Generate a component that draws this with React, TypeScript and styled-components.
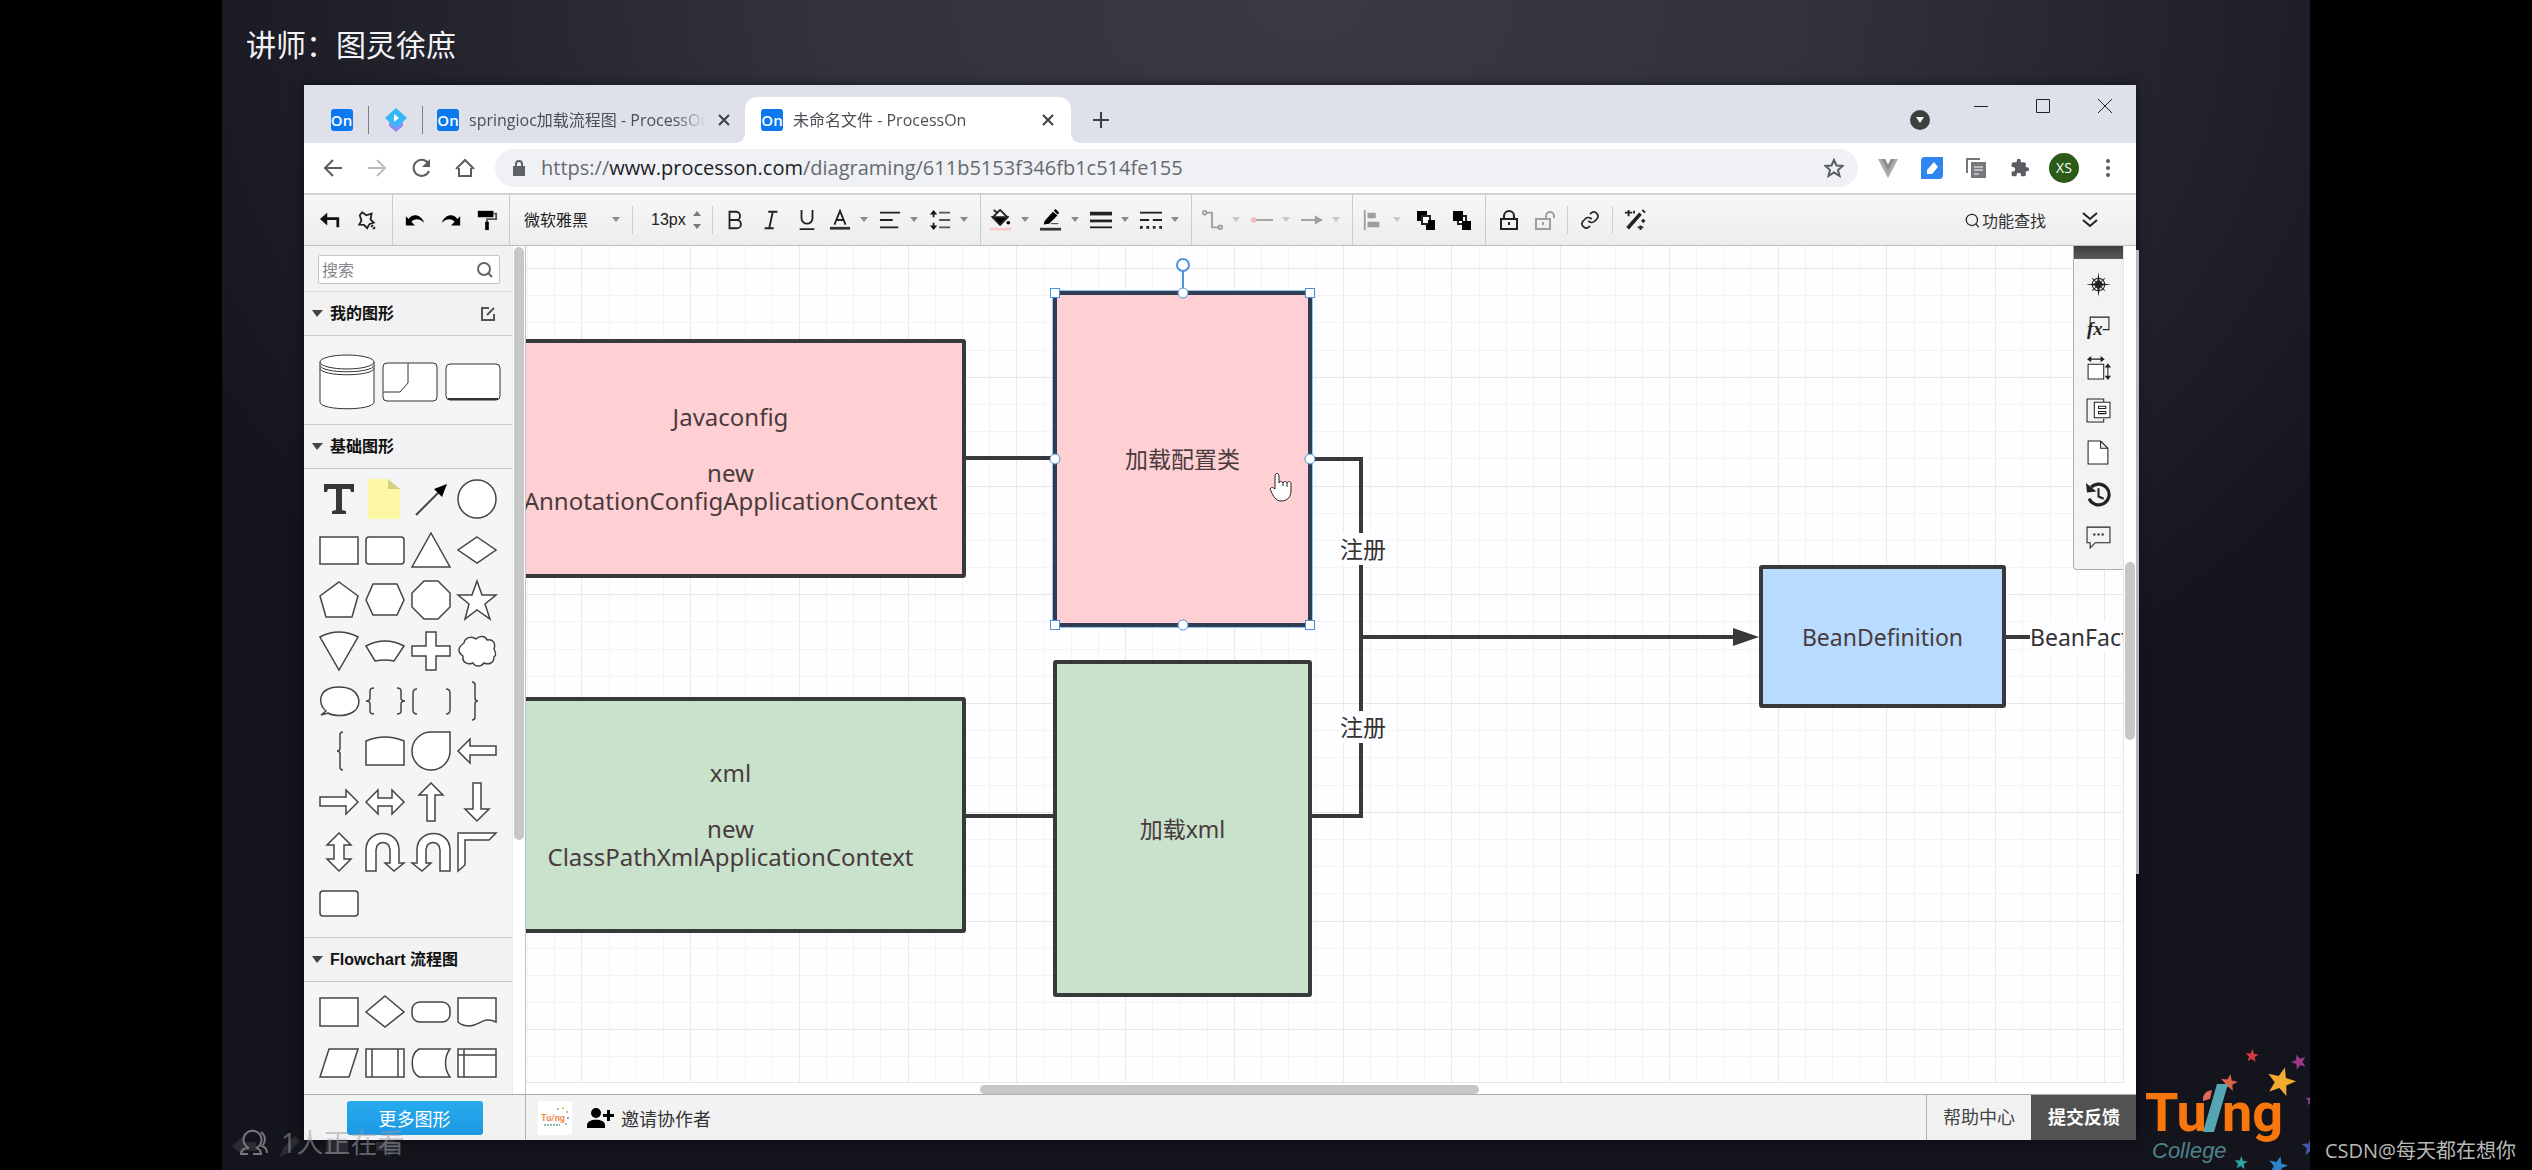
import React from "react";
import styled, { createGlobalStyle, css } from "styled-components";

const ui = `"Open Sans", "Noto Sans CJK SC", sans-serif`;
const diagramFont = `"Noto Sans", "Noto Sans CJK SC", sans-serif`;

const GlobalStyle = createGlobalStyle`
  * { box-sizing: border-box; }
  html, body { margin: 0; background: #000; }
  body { font-family: ${ui}; color: #333; overflow: hidden; }
  button, input, select { font: inherit; color: inherit; border: 0; background: none; padding: 0; margin: 0; outline: 0; }
  h1, h2, p { margin: 0; }
`;

const Page = styled.div`
  height: 100vh;
  padding: 0 222px;
  background: #000;
  position: relative;
`;
const Stage = styled.main`
  height: 100%;
  display: flex;
  flex-direction: column;
  padding: 0 174px 30px 82px;
  position: relative;
  overflow: hidden;
  background:
    radial-gradient(ellipse 60% 75% at 52% 0%, #3a3944 0%, #32323c 40%, rgba(20, 20, 30, 0) 100%),
    #14141d;
`;
const Lecturer = styled.h1`
  height: 85px;
  flex: none;
  margin-left: -58px;
  padding-top: 1px;
  font-size: 30px;
  line-height: 88px;
  font-weight: 400;
  color: #f4f4f6;
`;
const Browser = styled.section`
  flex: 1;
  min-height: 0;
  display: flex;
  flex-direction: column;
  background: #fff;
  position: relative;
  box-shadow: 0 0 10px rgba(0, 0, 0, 0.6);
`;
const EdgeLine = styled.div`
  position: absolute;
  left: 100%;
  top: 165px;
  width: 3px;
  height: 624px;
  background: #b4b8c1;
`;

/* ---- tab strip ---- */
const TabStrip = styled.div`
  height: 58px;
  flex: none;
  display: flex;
  align-items: flex-end;
  padding-left: 11px;
  background: #dee1e9;
`;
const Pinned = styled.button`
  width: 53px;
  height: 46px;
  display: flex;
  align-items: center;
  justify-content: center;
`;
const TabDivider = styled.span`
  width: 1px;
  height: 28px;
  margin-bottom: 9px;
  background: #7d8087;
`;
const Tab = styled.div<{ $active?: boolean }>`
  width: ${(p) => (p.$active ? 326 : 322)}px;
  height: 46px;
  padding: 0 ${(p) => (p.$active ? 16 : 14)}px;
  display: flex;
  align-items: center;
  gap: 10px;
  color: #4b4e55;
  position: relative;
  ${(p) =>
    p.$active &&
    css`
      background: #fff;
      border-radius: 12px 12px 0 0;
      &::before,
      &::after {
        content: "";
        position: absolute;
        bottom: 0;
        width: 10px;
        height: 10px;
      }
      &::before {
        right: 100%;
        background: radial-gradient(circle at 0 0, transparent 10px, #fff 10px);
      }
      &::after {
        left: 100%;
        background: radial-gradient(circle at 100% 0, transparent 10px, #fff 10px);
      }
    `}
`;
const TabTitle = styled.span`
  flex: 1;
  font-size: 16px;
  line-height: 24px;
  white-space: nowrap;
  overflow: hidden;
  mask-image: linear-gradient(90deg, #000 calc(100% - 32px), transparent);
`;
const Favicon = styled.span`
  width: 22px;
  height: 22px;
  flex: none;
  border-radius: 3px;
  background: #0a78ee;
  color: #fff;
  font: 600 15px/22px "Open Sans", sans-serif;
  text-align: center;
`;
const Bare = styled.button<{ $w: number; $h?: number; $muted?: boolean }>`
  width: ${(p) => p.$w}px;
  height: ${(p) => p.$h ?? 36}px;
  flex: none;
  display: flex;
  align-items: center;
  justify-content: center;
  opacity: ${(p) => (p.$muted ? 0.4 : 1)};
`;
const NewTab = styled(Bare)`
  margin-left: 18px;
`;
const WindowControls = styled.div`
  margin-left: auto;
  height: 100%;
  display: flex;
  align-items: flex-start;
`;
const TabSearch = styled(Bare)`
  margin: 12px 20px 0 0;
`;

/* ---- address bar ---- */
const AddressRow = styled.div`
  height: 50px;
  flex: none;
  display: flex;
  align-items: center;
  padding: 0 6px 0 7px;
`;
const Omnibox = styled.div`
  flex: 1;
  height: 38px;
  margin: 0 8px;
  padding: 0 12px 0 16px;
  display: flex;
  align-items: center;
  gap: 14px;
  border-radius: 19px;
  background: #f0f1f4;
`;
const Url = styled.div`
  flex: 1;
  font-size: 20px;
  line-height: 28px;
  color: #666a70;
  white-space: nowrap;
  outline: 0;
  b {
    font-weight: 400;
    color: #202124;
  }
`;
const Avatar = styled.span`
  width: 30px;
  height: 30px;
  border-radius: 50%;
  background: #2c5a17;
  color: #fff;
  font-size: 14px;
  line-height: 30px;
  text-align: center;
`;

/* ---- editor toolbar ---- */
const Toolbar = styled.div`
  height: 53px;
  flex: none;
  display: flex;
  border-top: 2px solid #d2d2d5;
  border-bottom: 1px solid #bdbdc0;
  background: linear-gradient(#f7f7f8, #ededef);
`;
const Group = styled.div<{ $pad?: number; $last?: boolean }>`
  display: flex;
  align-items: center;
  padding: 0 ${(p) => p.$pad ?? 5}px;
  border-right: ${(p) => (p.$last ? "0" : "1px solid #cbcbce")};
`;
const ShortRule = styled.span`
  width: 1px;
  height: 28px;
  margin: 0 4px;
  background: #cfcfd2;
`;
const FontPicker = styled.label`
  width: 113px;
  padding: 0 4px 0 9px;
  display: flex;
  align-items: center;
  font-size: 16px;
  select {
    flex: 1;
    min-width: 0;
    height: 30px;
    appearance: none;
    color: #222;
  }
`;
const SizePicker = styled.label`
  width: 71px;
  padding-left: 14px;
  display: flex;
  align-items: center;
  gap: 2px;
  input {
    width: 38px;
    height: 30px;
    font: 16px "Liberation Sans", sans-serif;
    color: #222;
  }
`;
const DropBtn = styled.button<{ $muted?: boolean }>`
  width: 50px;
  height: 36px;
  display: flex;
  align-items: center;
  gap: 5px;
  padding-left: 4px;
  opacity: ${(p) => (p.$muted ? 0.4 : 1)};
`;
const ToolbarEnd = styled.div`
  margin-left: auto;
  display: flex;
  align-items: center;
  gap: 22px;
  padding-right: 24px;
`;
const FindBtn = styled.button`
  display: flex;
  align-items: center;
  gap: 2px;
  height: 36px;
  font-size: 16px;
`;

/* ---- body ---- */
const Body = styled.div`
  flex: 1;
  min-height: 0;
  display: flex;
`;
const Sidebar = styled.aside`
  width: 222px;
  flex: none;
  display: flex;
  border-right: 1px solid #bfbfc2;
  background: #fff;
`;
const ShapeList = styled.div`
  flex: 1;
  overflow: hidden;
  background: #f5f5f7;
  border-right: 1px solid #ececee;
`;
const Track = styled.div<{ $across?: boolean }>`
  display: flex;
  ${(p) => (p.$across ? "height: 11px; padding: 2px 0 0 454px;" : "width: 12px; padding: 1px 1px 0;")}
`;
const Thumb = styled.span<{ $len: number; $across?: boolean }>`
  ${(p) => (p.$across ? `width: ${p.$len}px; height: 9px;` : `height: ${p.$len}px; width: 10px;`)}
  border-radius: 5px;
  background: #c7c7c8;
`;
const SearchRow = styled.div`
  height: 46px;
  padding: 9px 12px 0 14px;
  border-bottom: 1px solid #d9d9db;
  background: #f2f2f3;
`;
const SearchBox = styled.label`
  height: 29px;
  display: flex;
  align-items: center;
  padding: 0 6px 0 3px;
  border: 1px solid #c6c6c9;
  border-radius: 2px;
  background: #fff;
  font-size: 16px;
  input {
    flex: 1;
    min-width: 0;
  }
  input::placeholder {
    color: #85858a;
    opacity: 1;
  }
`;
const SectionHead = styled.button`
  width: 100%;
  height: 44px;
  display: flex;
  align-items: center;
  gap: 7px;
  padding: 0 16px 0 8px;
  border-bottom: 1px solid #c9c9cb;
  background: #f2f2f3;
  font: 700 16px/24px "Liberation Sans", "Noto Sans CJK SC", sans-serif;
  color: #111;
  span {
    flex: 1;
    text-align: left;
  }
`;
const MyShapes = styled.div`
  height: 89px;
  display: flex;
  align-items: center;
  gap: 9px;
  padding: 4px 16px 0;
  border-bottom: 1px solid #c9c9cb;
`;
const ShapeGrid = styled.div<{ $h: number }>`
  height: ${(p) => p.$h}px;
  padding: 5px 12px 9px;
  display: grid;
  grid-template-columns: repeat(4, 46px);
  grid-auto-rows: 1fr;
  border-bottom: 1px solid #c9c9cb;
`;
const ShapeBtn = styled.button`
  display: flex;
  align-items: center;
  justify-content: center;
  svg {
    overflow: visible;
  }
`;

const Workspace = styled.div`
  flex: 1;
  min-width: 0;
  display: grid;
  grid-template: 1fr 11px / 1fr 12px;
  background: #fff;
`;
const Board = styled.div`
  position: relative;
  overflow: hidden;
  background: #fefdff;
  border-right: 1px solid #e6e6ea;
  border-bottom: 1px solid #e6e6ea;
`;
const Layer = styled.svg`
  position: absolute;
  inset: 0;
  width: 100%;
  height: 100%;
`;
const Node = styled.div<{
  $x: number;
  $y: number;
  $w: number;
  $h: number;
  $fill: string;
  $selected?: boolean;
  $large?: boolean;
}>`
  position: absolute;
  left: ${(p) => p.$x}px;
  top: ${(p) => p.$y}px;
  width: ${(p) => p.$w}px;
  height: ${(p) => p.$h}px;
  display: flex;
  align-items: center;
  justify-content: center;
  border: 4px solid ${(p) => (p.$selected ? "#2f3d54" : "#38393b")};
  border-radius: 3px;
  background: ${(p) => p.$fill};
  font: ${(p) => (p.$large ? 24 : 23)}px/28px ${diagramFont};
  color: #4a3a3d;
  text-align: center;
  white-space: pre;
  box-shadow: ${(p) => (p.$selected ? "0 0 0 1px #9cc3ee" : "none")};
`;
const EdgeLabel = styled.span<{ $x: number; $y: number }>`
  position: absolute;
  left: ${(p) => p.$x}px;
  top: ${(p) => p.$y}px;
  padding: 1px 0;
  background: #fefdff;
  font: 23px/30px ${diagramFont};
  color: #333;
  white-space: nowrap;
`;
const Dock = styled.nav`
  position: absolute;
  top: 0;
  right: 0;
  width: 50px;
  height: 324px;
  border: 1px solid #b0b0b3;
  border-width: 0 0 1px 1px;
  border-bottom-left-radius: 4px;
  background: #f3f3f4;
  display: flex;
  flex-direction: column;
  align-items: center;
  &::before {
    content: "";
    align-self: stretch;
    height: 13px;
    margin-bottom: 4px;
    background: linear-gradient(#3c3c3e, #5a5a5c);
  }
`;

/* ---- footer ---- */
const Footer = styled.footer`
  height: 46px;
  flex: none;
  display: flex;
  border-top: 1px solid #adadb0;
  background: #f2f2f3;
  font-size: 18px;
`;
const FooterLeft = styled.div`
  width: 222px;
  padding-top: 6px;
  display: flex;
  justify-content: center;
  align-items: flex-start;
  border-right: 1px solid #b0b0b3;
`;
const MoreBtn = styled.button`
  width: 136px;
  height: 34px;
  border-radius: 3px;
  background: linear-gradient(#27abee, #1c98e2);
  color: #fff;
  font-size: 18px;
`;
const Team = styled.div`
  flex: 1;
  display: flex;
  align-items: center;
  gap: 15px;
  padding-left: 12px;
`;
const TeamLogo = styled.span`
  width: 34px;
  height: 34px;
  display: flex;
  background: #fff;
`;
const InviteBtn = styled.button`
  display: flex;
  align-items: center;
  gap: 7px;
`;
const FooterLink = styled.a<{ $dark?: boolean }>`
  padding: 0 16px;
  line-height: 45px;
  text-decoration: none;
  border-left: 1px solid ${(p) => (p.$dark ? "#4f4f50" : "#b0b0b3")};
  background: ${(p) => (p.$dark ? "#525253" : "transparent")};
  color: ${(p) => (p.$dark ? "#fff" : "#444")};
  font-weight: ${(p) => (p.$dark ? 700 : 400)};
`;

/* ---- overlays ---- */
const Viewers = styled.div`
  position: absolute;
  left: 14px;
  bottom: 8px;
  display: flex;
  align-items: center;
  gap: 13px;
  font-size: 27px;
  line-height: 38px;
  color: rgba(160, 160, 165, 0.55);
`;
const PenTools = styled.svg`
  position: absolute;
  left: 10px;
  bottom: 12px;
`;
const School = styled.svg`
  position: absolute;
  right: 0;
  bottom: 0;
`;
const Credit = styled.p`
  position: absolute;
  right: 16px;
  bottom: 4px;
  font-size: 20px;
  line-height: 30px;
  color: #b8b8b8;
`;

type IcoProps = { s?: number; w?: number; c?: string; f?: string; box?: number; children: React.ReactNode };
const Ico = ({ s = 24, w = 2, c = "#222", f = "none", box = 24, children }: IcoProps) => (
  <svg width={s} height={s} viewBox={`0 0 ${box} ${box}`} fill={f} stroke={c} strokeWidth={w} aria-hidden="true">
    {children}
  </svg>
);
const Caret = () => (
  <svg width="16" height="8" viewBox="0 0 16 8" aria-hidden="true">
    <path d="M4 1h8L8 6z" fill="#8a8a8c" />
  </svg>
);
const Close = ({ s = 14 }: { s?: number }) => (
  <Ico s={s} w={2} c="#3c4043" box={14}>
    <path d="M2 2l10 10M12 2L2 12" />
  </Ico>
);

const tool = {
  reply: <path d="M1 11l8-7v5h13v11h-3v-8H9v6z" fill="#111" stroke="none" />,
  beautify: (
    <>
      <path d="M9 3l4 4 6-1-2 6 3 4-5 1-3 4-3-4-5-1 3-4-1-6z" transform="rotate(-8 12 12)" />
      <path d="M18 18l4 4" strokeWidth="3" strokeDasharray="2 1" />
    </>
  ),
  undo: <path d="M2 8v10h10l-4-4c3-4 9-4 14 1-3-9-13-11-17-4z" fill="#000" stroke="none" />,
  redo: <path d="M22 8v10H12l4-4c-3-4-9-4-14 1C5 6 15 4 19 11z" fill="#000" stroke="none" />,
  brush: (
    <>
      <path d="M2 2h17v7H2z" fill="#000" stroke="none" />
      <path d="M19 5h3v6H12v4" stroke="#555" />
      <path d="M10 14h4v9h-4z" fill="#000" stroke="none" />
    </>
  ),
  bold: <path d="M6 3h7a4.5 4.5 0 010 9H6zM6 12h8a4.500 4.500 0 010 9H6z" />,
  italic: <path d="M9 3h10M5 21h10M14 3l-4 18" />,
  underline: <path d="M6 1v9a6 6 0 0012 0V1M4 22h16" />,
};
const dropTools: Record<string, React.ReactNode> = {
  color: (
    <>
      <path d="M6 17l6-15 6 15M8 12h8" />
      <path d="M1 21h22" strokeWidth="3" stroke="#333" />
    </>
  ),
  align: <path d="M1 4h22M1 12h14M1 20h20" />,
  spacing: (
    <>
      <path d="M11 4h12M11 12h12M11 20h12" stroke="#555" />
      <path d="M5 3v6M5 15v6" />
      <path d="M5 1l4 5H1zM5 23l4-5H1z" fill="#111" stroke="none" />
    </>
  ),
  fill: (
    <>
      <path d="M4 1l4 3" />
      <path d="M11 1l8 8-8 8-8-8z" />
      <path d="M3 9h16l-8 8z" fill="#000" />
      <circle cx="20" cy="15" r="2" fill="#000" stroke="none" />
      <path d="M0 22h23" stroke="#fbc8cc" strokeWidth="3" />
    </>
  ),
  pen: (
    <>
      <path d="M5 13L14 3l5 4-9 9-6 1z" fill="#000" stroke="none" />
      <path d="M15 2l2-2 4 4-2 2z" fill="#000" stroke="none" />
      <path d="M12 16h8" strokeWidth="1" />
      <path d="M0 22h23" stroke="#333" strokeWidth="3" />
    </>
  ),
  weight: (
    <>
      <path d="M0 5h24" strokeWidth="4" />
      <path d="M0 13h24" strokeWidth="3" />
      <path d="M0 20h24" strokeWidth="2" />
    </>
  ),
  dash: (
    <>
      <path d="M0 4h24" />
      <path d="M0 12h10M14 12h10" />
      <path d="M0 20h24" strokeDasharray="3 4" strokeWidth="3" />
    </>
  ),
  link: (
    <>
      <path d="M5 4h7v16h7" />
      <circle cx="4" cy="4" r="2" fill="#fff" />
      <circle cx="21" cy="20" r="2" fill="#fff" />
    </>
  ),
  start: (
    <>
      <path d="M2 12h22" />
      <circle cx="3" cy="12" r="2" stroke="#f66" fill="#f66" />
    </>
  ),
  end: (
    <>
      <path d="M0 12h18" />
      <path d="M15 7l9 5-9 5z" fill="#222" stroke="none" />
    </>
  ),
  arrange: (
    <>
      <path d="M3 1v22" />
      <path d="M6 4h9v6H6zM6 14h13v6H6z" fill="#222" stroke="none" />
    </>
  ),
};
const Drop = ({ name, label, muted }: { name: string; label: string; muted?: boolean }) => (
  <DropBtn aria-label={label} $muted={muted}>
    <Ico s={22}>{dropTools[name]}</Ico>
    <Caret />
  </DropBtn>
);

const basicShapes: React.ReactNode[] = [
  <path d="M4 4h30v8h-3l-1-3h-8v21l4 1v3H12v-3l4-1V9H8l-1 3H4z" fill="#38383a" stroke="none" />,
  <>
    <path d="M2-1h20l12 10v30H2z" fill="#fcf7a2" stroke="none" />
    <path d="M22-1v10h12z" fill="#d5cf86" stroke="none" />
  </>,
  <>
    <path d="M4 35L28 11" strokeWidth="2" />
    <path d="M35 4L30 17l-8-8z" fill="#000" stroke="none" />
  </>,
  <circle cx="19" cy="19" r="19" />,
  <rect x="0" y="6" width="38" height="27" />,
  <rect x="0" y="6" width="38" height="27" rx="3" />,
  <path d="M19 2l19 34H0z" />,
  <path d="M19 6l19 13-19 13L0 19z" />,
  <path d="M19 1l19 14-6 21H6L0 15z" />,
  <path d="M7 3h24l7 16-7 15H7L0 19z" />,
  <path d="M12 0h14l12 12v14L26 38H12L0 26V12z" />,
  <path d="M19 0l5 14h14L27 23l5 15-13-9-12 9 4-15L0 14h14z" />,
  <path d="M0 5Q19-5 38 5L19 38z" />,
  <path d="M0 14Q19 4 38 14L28 29Q19 27 9 29z" />,
  <path d="M14 0h10v14h14v10H24v14H14V24H0V14h14z" />,
  <path d="M6 11c1-6 8-7 12-4 4-4 10-3 11 1 6-1 9 3 7 9 2 4 2 7 0 8 0 6-5 8-10 6-3 4-9 4-11 0-5 2-11 0-10-7-6-4-5-9 1-13z" />,
  <path d="M6 29C-3 22-2 5 19 5s25 18 14 25c-8 5-20 4-25 1L1 33z" />,
  <path
    d="M8 6q-4 0-4 3v7q0 3-4 3 4 0 4 3v7q0 3 4 3M31 6q4 0 4 3v7q0 3 4 3-4 0-4 3v7q0 3-4 3"
    fill="none"
  />,
  <path d="M5 7q-4 0-4 4v17q0 4 4 4M34 7q4 0 4 4v17q0 4-4 4" fill="none" />,
  <path d="M14 0q3 0 3 3v13q0 3 3 3-3 0-3 3v13q0 3-3 3" fill="none" />,
  <path d="M23 0q-3 0-3 3v13q0 3-3 3 3 0 3 3v13q0 3 3 3" fill="none" />,
  <path d="M0 9Q19 1 38 9v24H0z" />,
  <path d="M19 0h19v19A19 19 0 1119 0z" />,
  <path d="M0 19L12 7v7h26v9H12v8z" />,
  <path d="M38 19L26 7v7H0v9h26v8z" />,
  <path d="M0 19L12 7v8h14V7l12 12-12 12v-8H12v8z" />,
  <path d="M19 0L7 12h8v26h8V12h8z" />,
  <path d="M19 38L7 26h8V0h8v26h8z" />,
  <path d="M19 0l12 12h-7v14h7L19 38 7 26h7V12H7z" />,
  <path d="M0 38V17C0-5 33-5 33 17v13h5l-10 8-9-8h5V17c0-10-14-10-14 0v21z" />,
  <path d="M38 38V17C38-5 5-5 5 17v13H0l10 8 9-8h-5V17c0-10 14-10 14 0v21z" />,
  <path d="M0 0h38l-7 7H7v25l-7 6z" />,
  <rect x="0" y="7" width="38" height="25" rx="3" />,
];
const flowShapes: React.ReactNode[] = [
  <path d="M0 5h38v28H0z" />,
  <path d="M19 3l19 16-19 15L0 19z" />,
  <rect x="0" y="9" width="38" height="20" rx="8" />,
  <path d="M0 5h38v24c-12-6-16 3-26 4q-8 0-12-4z" />,
  <path d="M9 5h29l-9 28H0z" />,
  <path d="M0 5h38v28H0zM6 5v28M32 5v28" />,
  <path d="M7 5h31c-6 8-6 20 0 28H7C-2 28-2 10 7 5z" />,
  <path d="M0 5h38v28H0zM6 5v28M0 11h38" />,
];
const Shapes = ({ list, h, name }: { list: React.ReactNode[]; h: number; name: string }) => (
  <ShapeGrid $h={h}>
    {list.map((d, i) => (
      <ShapeBtn key={i} aria-label={`${name} ${i + 1}`}>
        <svg width="38" height="38" viewBox="0 0 38 38" fill="#fff" stroke="#444446" strokeWidth="1.500">
          {d}
        </svg>
      </ShapeBtn>
    ))}
  </ShapeGrid>
);
const Head = ({ title, edit }: { title: string; edit?: boolean }) => (
  <SectionHead>
    <svg width="11" height="8" viewBox="0 0 11 8">
      <path d="M0 0h11L5 7z" fill="#444" />
    </svg>
    <span>{title}</span>
    {edit && (
      <Ico s={16} box={16} c="#555">
        <path d="M9 2H2v12h12V8M7 9l7-7" />
      </Ico>
    )}
  </SectionHead>
);

const step = (origin: number, i: number) => Math.round(origin + (i * 435) / 16) + 0.5;
const GridLines = () => (
  <Layer aria-hidden="true">
    {Array.from({ length: 60 }, (_, i) => (
      <path key={`v${i}`} d={`M${step(1, i)} 0V2000`} stroke={i % 4 === 2 ? "#e8e8ec" : "#f3f3f6"} />
    ))}
    {Array.from({ length: 36 }, (_, i) => (
      <path key={`h${i}`} d={`M0 ${step(22, i)}H3000`} stroke={i % 4 === 0 ? "#e8e8ec" : "#f3f3f6"} />
    ))}
  </Layer>
);

const corners = [
  [529, 47],
  [784, 47],
  [529, 379],
  [784, 379],
];
const mids = [
  [657, 47],
  [529, 213],
  [784, 213],
  [657, 379],
];

const dockIcons: [string, React.ReactNode][] = [
  [
    "导航",
    <>
      <path d="M12 0l1 8 3 3 8 1-8 1-3 3-1 8-1-8-3-3-8-1 8-1 3-3z" fill="#222" stroke="none" />
      <circle cx="12" cy="12" r="6" />
      <path d="M6 6l12 12M18 6L6 18" strokeWidth="1" />
    </>,
  ],
  [
    "公式",
    <>
      <path d="M4 10V3h18v12h-6" />
      <text x="1" y="20" fontSize="18" fontFamily="Liberation Serif, serif" fontStyle="italic" fontWeight="700" fill="#222" stroke="none">
        fx
      </text>
    </>,
  ],
  [
    "尺寸",
    <>
      <path d="M2 8h15v14H2z" fill="#fff" />
      <path d="M3 3h13M21 10v10" />
      <path d="M1 3l4-3v6zM18 3l-4-3v6zM21 7l3 4h-6zM21 23l3-4h-6z" fill="#222" stroke="none" />
    </>,
  ],
  [
    "页面",
    <>
      <path d="M17 4V1H1v22h16v-3" />
      <path d="M8 4h15v15H8z" fill="#fff" />
      <path d="M12 8h7v2h-7zM12 13h7v2h-7z" strokeWidth="1" />
    </>,
  ],
  ["文档", <path d="M2 1h12l7 7v15H2zM14 1v7h7" fill="#fff" />],
  [
    "历史",
    <>
      <path d="M5 5a10 10 0 11-2 11" strokeWidth="3" />
      <path d="M0 1l1 9 9-1z" fill="#222" stroke="none" />
      <path d="M12 6v8l5 2" strokeWidth="2" />
    </>,
  ],
  [
    "评论",
    <>
      <path d="M1 3h22v15H9l-5 5v-5H1z" />
      <path d="M7 10h11" strokeDasharray="2 2" strokeWidth="2" />
    </>,
  ],
];

const star = (cx: number, cy: number, r: number, rot: number) =>
  Array.from({ length: 10 }, (_, i) => {
    const a = ((rot + i * 36 - 90) * Math.PI) / 180;
    const k = i % 2 ? r * 0.42 : r;
    return `${(cx + k * Math.cos(a)).toFixed(1)},${(cy + k * Math.sin(a)).toFixed(1)}`;
  }).join(" ");
const schoolStars: [number, number, number, number, string][] = [
  [112, 16, 7, 5, "#d23c3c"],
  [159, 22, 8, -20, "#9c3a86"],
  [89, 43, 9, 10, "#dd6242"],
  [141, 42, 15, 15, "#f0ab30"],
  [171, 60, 6, 0, "#8b3f92"],
  [171, 107, 10, 0, "#3b5aa8"],
  [101, 123, 7, 5, "#2ea2a2"],
  [138, 126, 10, 15, "#2f82c8"],
];

export default function App() {
  return (
    <Page>
      <GlobalStyle />
      <Stage>
        <Lecturer>讲师：图灵徐庶</Lecturer>
        <Browser>
          <EdgeLine />
          <TabStrip>
            <Pinned aria-label="ProcessOn">
              <Favicon>On</Favicon>
            </Pinned>
            <TabDivider />
            <Pinned aria-label="固定标签页">
              <svg width="22" height="24" viewBox="0 0 22 24">
                <path d="M4 14h14v4l-7 6-7-6z" fill="#8f8df2" />
                <path d="M11 0l11 10-11 10L0 10z" fill="#35b6f8" />
                <path d="M9 6l5 4-5 4z" fill="#fff" />
              </svg>
            </Pinned>
            <TabDivider />
            <Tab>
              <Favicon>On</Favicon>
              <TabTitle>springioc加载流程图 - ProcessOn</TabTitle>
              <Bare $w={14} aria-label="关闭标签页">
                <Close />
              </Bare>
            </Tab>
            <Tab $active>
              <Favicon>On</Favicon>
              <TabTitle>未命名文件 - ProcessOn</TabTitle>
              <Bare $w={14} aria-label="关闭标签页">
                <Close />
              </Bare>
            </Tab>
            <NewTab $w={24} $h={46} aria-label="新标签页">
              <Ico s={16} c="#3c4043" box={16}>
                <path d="M8 0v16M0 8h16" />
              </Ico>
            </NewTab>
            <WindowControls>
              <TabSearch $w={20} $h={46} aria-label="搜索标签页">
                <Ico s={20} box={20} w={0}>
                  <circle cx="10" cy="10" r="10" fill="#3c4043" />
                  <path d="M6 7h8l-4 6z" fill="#fff" />
                </Ico>
              </TabSearch>
              <Bare $w={62} $h={42} aria-label="最小化">
                <Ico s={16} box={16} w={1}>
                  <path d="M1 8.500h14" />
                </Ico>
              </Bare>
              <Bare $w={62} $h={42} aria-label="最大化">
                <Ico s={16} box={16} w={1}>
                  <path d="M1.500 1.500h13v13h-13z" />
                </Ico>
              </Bare>
              <Bare $w={62} $h={42} aria-label="关闭">
                <Ico s={16} box={16} w={1}>
                  <path d="M1 1l14 14M15 1L1 15" />
                </Ico>
              </Bare>
            </WindowControls>
          </TabStrip>

          <AddressRow>
            <Bare $w={44} aria-label="后退">
              <Ico s={20} box={20} c="#5a5d62">
                <path d="M19 10H2M10 2l-8 8 8 8" />
              </Ico>
            </Bare>
            <Bare $w={44} aria-label="前进">
              <Ico s={20} box={20} c="#b9bbbf">
                <path d="M1 10h17M10 2l8 8-8 8" />
              </Ico>
            </Bare>
            <Bare $w={44} aria-label="重新加载">
              <Ico s={20} box={20} c="#5a5d62">
                <path d="M17 5a8 8 0 101 8" />
                <path d="M19 1v8h-8z" fill="#5a5d62" stroke="none" />
              </Ico>
            </Bare>
            <Bare $w={44} aria-label="主页">
              <Ico s={20} box={20} c="#5a5d62">
                <path d="M4 10v8h12v-8M1 11l9-9 9 9" />
              </Ico>
            </Bare>
            <Omnibox>
              <Ico s={16} box={16} c="#5f6368">
                <path d="M2 6h12v10H2z" fill="#5f6368" stroke="none" />
                <path d="M5 7V4a3 3 0 016 0v3" />
              </Ico>
              <Url role="textbox" aria-label="地址" contentEditable suppressContentEditableWarning spellCheck={false}>
                https://<b>www.processon.com</b>/diagraming/611b5153f346fb1c514fe155
              </Url>
              <Bare $w={24} aria-label="收藏">
                <Ico s={20} box={20} w={2} c="#5a5d62">
                  <path d="M10 2l2.500 5.500 6 .5-4.500 4 1.500 6-5.500-3.500L4.500 18 6 12 1.500 8l6-.5z" />
                </Ico>
              </Bare>
            </Omnibox>
            <Bare $w={44} aria-label="Vue">
              <svg width="20" height="19" viewBox="0 0 20 19">
                <path d="M0 0h7l3 6 3-6h7L10 19z" fill="#a9a9ab" />
                <path d="M4 0h3l3 6 3-6h3l-6 11z" fill="#858587" />
              </svg>
            </Bare>
            <Bare $w={44} aria-label="扩展">
              <svg width="22" height="22" viewBox="0 0 22 22">
                <path d="M4 0h18v18a4 4 0 01-4 4H0V4a4 4 0 014-4z" fill="#2f86f0" />
                <path d="M13 5l4 5-6 7H6v-4z" fill="#fff" />
              </svg>
            </Bare>
            <Bare $w={44} aria-label="复制">
              <Ico s={22} box={22} c="#77787b">
                <path d="M2 16V2h13" />
                <path d="M6 5h15v16H6z" fill="#77787b" stroke="none" />
                <path d="M9 10h9M9 13h9M9 17h5" stroke="#fff" strokeWidth="1" />
              </Ico>
            </Bare>
            <Bare $w={44} aria-label="扩展程序">
              <svg width="20" height="20" viewBox="0 0 24 24">
                <path
                  d="M20.500 11H19V7a2 2 0 00-2-2h-4V3.500a2.500 2.500 0 00-5 0V5H4a2 2 0 00-2 2v3.800h1.500a2.700 2.700 0 010 5.400H2V20a2 2 0 002 2h3.800v-1.500a2.700 2.700 0 015.400 0V22H17a2 2 0 002-2v-4h1.500a2.500 2.500 0 000-5z"
                  fill="#5a5d62"
                />
              </svg>
            </Bare>
            <Bare $w={44} aria-label="账号">
              <Avatar>XS</Avatar>
            </Bare>
            <Bare $w={44} aria-label="菜单">
              <svg width="4" height="18" viewBox="0 0 4 18" fill="#55585d">
                <circle cx="2" cy="2" r="2" />
                <circle cx="2" cy="9" r="2" />
                <circle cx="2" cy="16" r="2" />
              </svg>
            </Bare>
          </AddressRow>

          <Toolbar>
            <Group $pad={8}>
              <Bare $w={36} aria-label="返回"><Ico s={22}>{tool.reply}</Ico></Bare>
              <Bare $w={36} aria-label="美化"><Ico s={22} w={2}>{tool.beautify}</Ico></Bare>
            </Group>
            <Group $pad={4}>
              <Bare $w={36} aria-label="撤销"><Ico s={22}>{tool.undo}</Ico></Bare>
              <Bare $w={36} aria-label="恢复"><Ico s={22}>{tool.redo}</Ico></Bare>
              <Bare $w={36} aria-label="格式刷"><Ico s={22}>{tool.brush}</Ico></Bare>
            </Group>
            <Group>
              <FontPicker>
                <select aria-label="字体" defaultValue="微软雅黑">
                  <option>微软雅黑</option>
                </select>
                <Caret />
              </FontPicker>
              <ShortRule />
              <SizePicker>
                <input aria-label="字号" defaultValue="13px" />
                <svg width="12" height="18" viewBox="0 0 12 18">
                  <path d="M2 5h8L6 0zM2 13h8l-4 5z" fill="#777" />
                </svg>
              </SizePicker>
              <ShortRule />
              <Bare $w={36} aria-label="粗体"><Ico s={22}>{tool.bold}</Ico></Bare>
              <Bare $w={36} aria-label="斜体"><Ico s={22}>{tool.italic}</Ico></Bare>
              <Bare $w={36} aria-label="下划线"><Ico s={22}>{tool.underline}</Ico></Bare>
              <Drop name="color" label="文本颜色" />
              <Drop name="align" label="对齐" />
              <Drop name="spacing" label="行距" />
            </Group>
            <Group>
              <Drop name="fill" label="填充" />
              <Drop name="pen" label="线条颜色" />
              <Drop name="weight" label="线条宽度" />
              <Drop name="dash" label="线条样式" />
            </Group>
            <Group>
              <Drop name="link" label="连线类型" muted />
              <Drop name="start" label="起点" muted />
              <Drop name="end" label="终点" muted />
            </Group>
            <Group>
              <Drop name="arrange" label="排列" muted />
              <Bare $w={36} aria-label="置于顶层">
                <Ico s={20} box={20}>
                  <path d="M1 1h10v10H1z" fill="#000" stroke="none" />
                  <path d="M6 6h8v8H6z" fill="#fff" />
                  <path d="M12 10h7v10h-9v-5h2z" fill="#000" stroke="none" />
                </Ico>
              </Bare>
              <Bare $w={36} aria-label="置于底层">
                <Ico s={20} box={20}>
                  <path d="M6 6h8v8H6z" fill="#fff" />
                  <path d="M1 1h10v10H1zM10 11h9v9h-9z" fill="#000" stroke="none" />
                </Ico>
              </Bare>
            </Group>
            <Group $last>
              <Bare $w={36} aria-label="锁定">
                <Ico s={20} box={20}>
                  <path d="M2 9h16v10H2zM5 9V6a5 5 0 0110 0v3M10 12v3" />
                </Ico>
              </Bare>
              <Bare $w={36} $muted aria-label="解锁">
                <Ico s={20} box={20}>
                  <path d="M1 9h14v10H1zM11 9V6a4 4 0 018 0v2M8 12v3" />
                </Ico>
              </Bare>
              <ShortRule />
              <Bare $w={36} aria-label="链接">
                <Ico s={20}>
                  <path d="M10 13a5 5 0 007.500.5l3-3a5 5 0 00-7-7L12 5M14 11a5 5 0 00-7.500-.5l-3 3a5 5 0 007 7L12 19" />
                </Ico>
              </Bare>
              <ShortRule />
              <Bare $w={36} aria-label="魔法棒">
                <Ico s={22}>
                  <path d="M4 21L18 5" strokeWidth="4" />
                  <path d="M20 1l3 3M5 1v7M1 4h8M11 2v3M21 11v4M19 13h4M18 18v5M15 20h6" />
                </Ico>
              </Bare>
            </Group>
            <ToolbarEnd>
              <FindBtn>
                <Ico s={15} w={2}>
                  <circle cx="11" cy="11" r="9" />
                  <path d="M17 17l5 6" />
                </Ico>
                功能查找
              </FindBtn>
              <Bare $w={44} aria-label="展开">
                <Ico s={16} box={16}>
                  <path d="M1 1l7 6 7-6M1 8l7 6 7-6" />
                </Ico>
              </Bare>
            </ToolbarEnd>
          </Toolbar>

          <Body>
            <Sidebar>
              <ShapeList>
                <SearchRow>
                  <SearchBox>
                    <input placeholder="搜索" aria-label="搜索" />
                    <Ico s={16} box={16} c="#666">
                      <circle cx="7" cy="7" r="6" />
                      <path d="M11 11l4 4" />
                    </Ico>
                  </SearchBox>
                </SearchRow>
                <Head title="我的图形" edit />
                <MyShapes>
                  <ShapeBtn aria-label="数据库">
                    <svg width="54" height="54" viewBox="0 0 54 54" fill="#fff" stroke="#333">
                      <path d="M0 7v40c0 9 54 9 54 0V7" />
                      <path d="M0 10c0 9 54 9 54 0M0 13c0 9 54 9 54 0" />
                      <ellipse cx="27" cy="7" rx="27" ry="7" />
                    </svg>
                  </ShapeBtn>
                  <ShapeBtn aria-label="分区">
                    <svg width="54" height="38" viewBox="0 0 54 38" fill="#fff" stroke="#333">
                      <rect x="0" y="0" width="54" height="38" rx="4" />
                      <path d="M25 0v20l-8 9H0" />
                    </svg>
                  </ShapeBtn>
                  <ShapeBtn aria-label="卡片">
                    <svg width="54" height="36" viewBox="0 0 54 36" fill="#fff" stroke="#333">
                      <rect x="0" y="0" width="54" height="36" rx="4" />
                      <path d="M2 35h50" strokeWidth="2" />
                    </svg>
                  </ShapeBtn>
                </MyShapes>
                <Head title="基础图形" />
                <Shapes list={basicShapes} h={469} name="基础图形" />
                <Head title="Flowchart 流程图" />
                <Shapes list={flowShapes} h={116} name="流程图" />
              </ShapeList>
              <Track>
                <Thumb $len={593} />
              </Track>
            </Sidebar>

            <Workspace>
              <Board>
                <GridLines />
                <Layer aria-hidden="true" fill="none" stroke="#38393b" strokeWidth="4">
                  <path d="M438 212H530M438 570H530M784 213H835V570H784M1480 391H1510" />
                  <path d="M835 391H1212" />
                  <path d="M1207 382l26 9-26 9z" fill="#38393b" stroke="none" />
                </Layer>
                <Node $x={-31} $y={93} $w={471} $h={239} $fill="#fed0d3" $large>
                  {"Javaconfig\n\nnew\nAnnotationConfigApplicationContext"}
                </Node>
                <Node $x={-31} $y={451} $w={471} $h={236} $fill="#c8e2cb" $large>
                  {"xml\n\nnew\nClassPathXmlApplicationContext"}
                </Node>
                <Node $x={527} $y={45} $w={259} $h={336} $fill="#fed0d3" $selected>
                  加载配置类
                </Node>
                <Node $x={527} $y={414} $w={259} $h={337} $fill="#c8e2cb">
                  加载xml
                </Node>
                <Node $x={1233} $y={319} $w={247} $h={143} $fill="#b8dcff">
                  BeanDefinition
                </Node>
                <EdgeLabel $x={814} $y={287}>注册</EdgeLabel>
                <EdgeLabel $x={814} $y={465}>注册</EdgeLabel>
                <EdgeLabel $x={1504} $y={375}>BeanFactory</EdgeLabel>
                <Layer aria-hidden="true" fill="#fff" stroke="#4b92dc" strokeWidth="2">
                  <path d="M657 25v18" />
                  <circle cx="657" cy="19" r="6" />
                  {corners.map(([x, y]) => (
                    <rect key={`${x}-${y}`} x={x - 4.5} y={y - 4.5} width="9" height="9" strokeWidth="1" />
                  ))}
                  {mids.map(([x, y]) => (
                    <circle key={`${x}-${y}`} cx={x} cy={y} r="5" strokeWidth="1" />
                  ))}
                  <path
                    d="M753 231c0-5-4-5-4 0v12c-3-3-6-1-4 2 2 5 5 10 10 10 7 0 10-5 10-10v-8c-1-2-3-2-4 0-1-2-3-2-4 0-1-2-3-2-4 0zM757 236v4M761 237v4"
                    stroke="#222"
                    strokeWidth="1"
                  />
                </Layer>
                <Dock>
                  {dockIcons.map(([label, icon]) => (
                    <Bare key={label} $w={42} $h={42} aria-label={label}>
                      <Ico s={25} w={1}>{icon}</Ico>
                    </Bare>
                  ))}
                </Dock>
              </Board>
              <Track style={{ paddingTop: 316 }}>
                <Thumb $len={178} />
              </Track>
              <Track $across>
                <Thumb $len={499} $across />
              </Track>
            </Workspace>
          </Body>

          <Footer>
            <FooterLeft>
              <MoreBtn>更多图形</MoreBtn>
            </FooterLeft>
            <Team>
              <TeamLogo>
                <svg width="34" height="34" viewBox="0 0 34 34">
                  <text x="3" y="20" fontSize="9" fontWeight="700" fontFamily="Roboto, sans-serif" fill="#ee8a4a">
                    Tu/ng
                  </text>
                  <path d="M6 24h16" stroke="#8cbcae" strokeWidth="2" strokeDasharray="2 1" />
                  <g fill="#d08080">
                    <circle cx="20" cy="8" r="1" />
                    <circle cx="25" cy="7" r="1" fill="#e0b050" />
                    <circle cx="29" cy="11" r="1" />
                    <circle cx="30" cy="17" r="1" fill="#7070c0" />
                    <circle cx="28" cy="23" r="1" fill="#60b0b0" />
                  </g>
                </svg>
              </TeamLogo>
              <InviteBtn>
                <svg width="27" height="22" viewBox="0 0 27 22" fill="#000">
                  <circle cx="9" cy="6" r="5" />
                  <path d="M0 21v-3c0-7 18-7 18 0v3z" />
                  <path d="M20 3h3v4h4v3h-4v4h-3v-4h-4V7h4z" />
                </svg>
                邀请协作者
              </InviteBtn>
            </Team>
            <FooterLink href="#help">帮助中心</FooterLink>
            <FooterLink href="#feedback" $dark>提交反馈</FooterLink>
          </Footer>
        </Browser>

        <PenTools width="170" height="22" viewBox="0 0 170 22" fill="rgba(150, 150, 156, 0.18)" aria-hidden="true">
          <path d="M0 10L12 0v6h12v9H12v6z" />
          <path d="M48 21l3-9L63 0l5 5-12 12z" />
          <rect x="94" y="2" width="22" height="16" rx="3" />
          <path d="M168 10L156 0v6h-12v9h12v6z" />
        </PenTools>
        <Viewers>
          <Ico s={32} box={32} c="#77777d">
            <path d="M13 21a9 9 0 117 0M13 21c-5 0-8 2-8 6h7M20 21c4 1 5 3 5 6h-8M25 5c5 4 5 10 1 14 3 1 5 4 5 7" />
          </Ico>
          <span>1人正在看</span>
        </Viewers>

        <School width="170" height="130" viewBox="0 0 170 130" aria-label="Turing College">
          {schoolStars.map(([x, y, r, rot, c]) => (
            <polygon key={`${x}-${y}`} points={star(x, y, r, rot)} fill={c} />
          ))}
          <g fontFamily="Roboto, sans-serif" fontWeight="700" fontSize="54" fill="#f8760c">
            <text x="5" y="91">Tu</text>
            <text x="82" y="91">ng</text>
          </g>
          <path d="M77 44h11L74 92H63z" fill="#55a5b4" />
          <path d="M63 57q2-6 9-7l-2 9-7 2z" fill="#e06a58" />
          <text x="12" y="118" fontFamily="Liberation Sans, sans-serif" fontStyle="italic" fontSize="22" fill="#4c8289">
            College
          </text>
        </School>
      </Stage>
      <Credit>CSDN@每天都在想你</Credit>
    </Page>
  );
}
